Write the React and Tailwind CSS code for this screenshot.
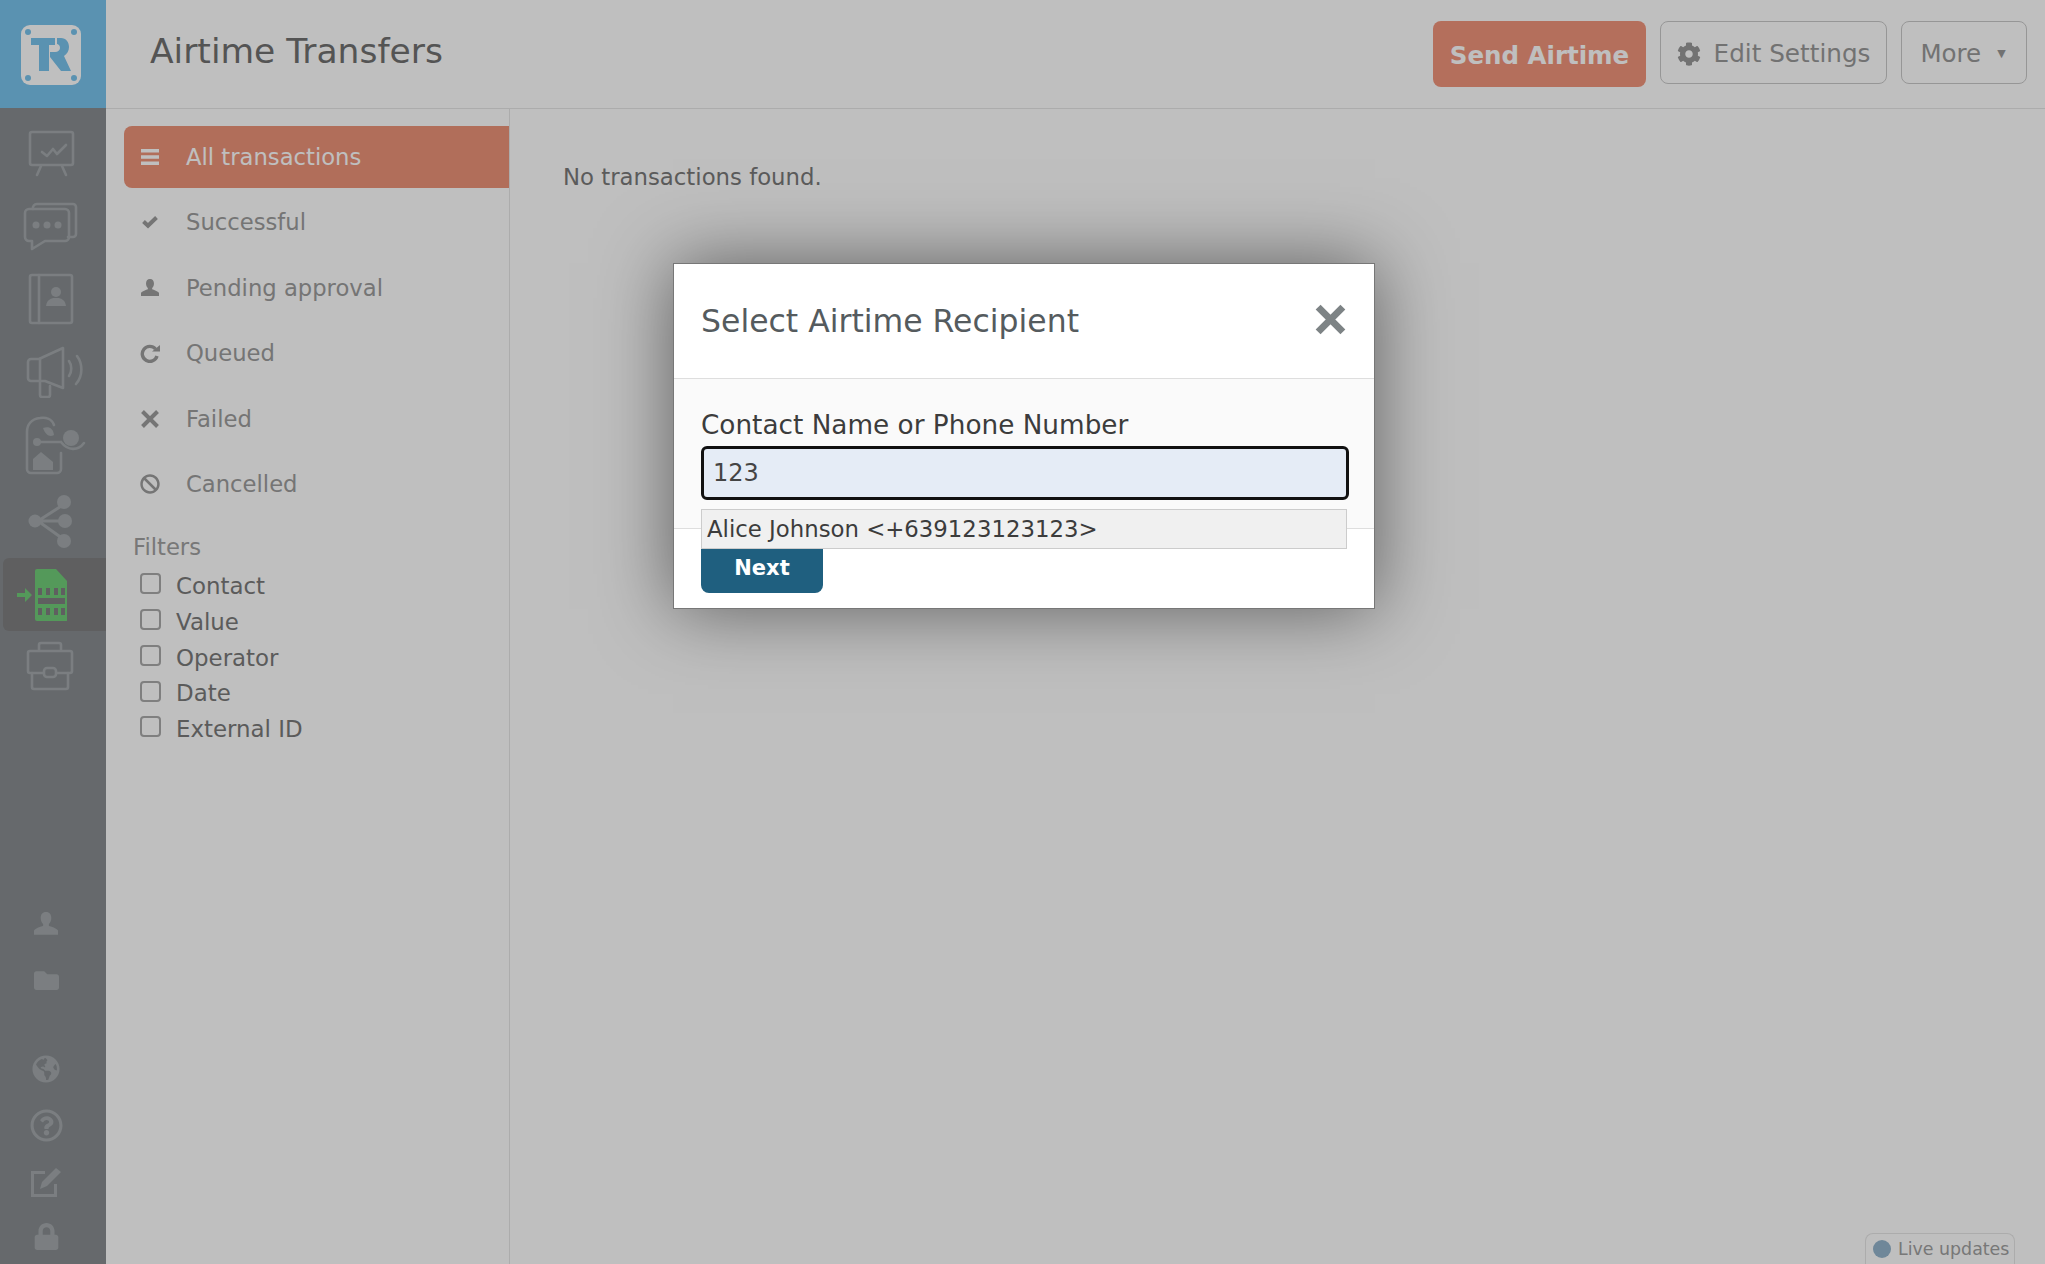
import React from 'react';
import { FaBan, FaCog, FaFolder, FaGlobeAmericas, FaRegQuestionCircle, FaLock } from 'react-icons/fa';

const Logo = () => (
  <svg width="60" height="60" viewBox="0 0 60 60">
    <rect width="60" height="60" rx="9" fill="#fff" />
    <circle cx="7" cy="7" r="3" fill="#79c3ec" />
    <circle cx="53" cy="7" r="3" fill="#79c3ec" />
    <circle cx="7" cy="53" r="3" fill="#79c3ec" />
    <circle cx="53" cy="53" r="3" fill="#79c3ec" />
    <path d="M10 13h24v7h-6v26H18V20h-8z" fill="#79c3ec" />
    <path d="M36 13h4c5 0 8 4 8 9 0 4-2 7-5 9l7 15h-10L29 32v-5h5c3 0 5-2 5-4 0-3-2-4-3-4z" fill="#79c3ec" />
  </svg>
);

const stroke = { fill: 'none', stroke: '#a4a9ac', strokeWidth: 2.6, strokeLinejoin: 'round', strokeLinecap: 'round' };

const ChartIcon = () => (
  <svg width="48" height="48" viewBox="0 0 48 48" {...stroke}>
    <rect x="3" y="3" width="43" height="33" rx="2" />
    <path d="M15 23l5 4 6-7 4 5 9-9M14 37l-4 9M35 37l4 9" />
  </svg>
);
const ChatIcon = () => (
  <svg width="56" height="56" viewBox="0 0 56 56" {...stroke}>
    <path d="M14 6h36a3 3 0 0 1 3 3v27a3 3 0 0 1-3 3h-5M14 6a4 4 0 0 0-4 5" />
    <path d="M6 11h36a4 4 0 0 1 4 4v24a4 4 0 0 1-4 4H22L9 51v-8H6a4 4 0 0 1-4-4V15a4 4 0 0 1 4-4z" />
    <circle cx="13" cy="27" r="3.5" fill="#a4a9ac" stroke="none" />
    <circle cx="24" cy="27" r="3.5" fill="#a4a9ac" stroke="none" />
    <circle cx="35" cy="27" r="3.5" fill="#a4a9ac" stroke="none" />
  </svg>
);
const ContactIcon = () => (
  <svg width="46" height="52" viewBox="0 0 46 52" {...stroke}>
    <rect x="2" y="2" width="42" height="48" rx="2" />
    <path d="M11 2v48" />
    <circle cx="28" cy="19" r="5" fill="#a4a9ac" stroke="none" />
    <path d="M18 33c1-6 4-7 7-8h6c3 1 6 2 7 8z" fill="#a4a9ac" stroke="none" />
  </svg>
);
const MegaphoneIcon = () => (
  <svg width="60" height="52" viewBox="0 0 60 52" className="ml-[8px]" {...stroke}>
    <path d="M38 2v40L20 35H6a3 3 0 0 1-3-3V16a3 3 0 0 1 3-3h8z" />
    <path d="M15 13v21M15 36v13a2 2 0 0 0 2 2h6a2 2 0 0 0 2-2v-9" />
    <path d="M44 15c3 4 3 11 0 15M52 10c6 8 6 20-1 28" />
  </svg>
);
const FlowIcon = () => (
  <svg width="62" height="60" viewBox="0 0 62 60" className="ml-[8px]" {...stroke}>
    <path d="M30 10c-2-6-8-8-14-7C8 4 3 9 3 17v37a4 4 0 0 0 4 4h26a4 4 0 0 0 4-4V38" />
    <path d="M12 27h24" />
    <circle cx="13" cy="27" r="4" fill="#a4a9ac" stroke="none" />
    <circle cx="47" cy="23" r="8" fill="#a4a9ac" stroke="none" />
    <path d="M37 27c7 9 17 9 23 1" />
    <path d="M30 20c-4 2-8 1-11-7 6-2 10 0 11 7z" fill="#a4a9ac" stroke="none" />
    <path d="M9 55V44l8-7 12 10v8z" fill="#a4a9ac" stroke="none" />
  </svg>
);
const ShareIcon = () => (
  <svg width="46" height="54" viewBox="0 0 46 54">
    <path d="M10 26L38 8M10 26h28M10 26l28 20" stroke="#a4a9ac" strokeWidth="3" fill="none" />
    <circle cx="7" cy="26" r="6.5" fill="#a4a9ac" />
    <circle cx="36" cy="7" r="7" fill="#a4a9ac" />
    <circle cx="37" cy="26" r="7" fill="#a4a9ac" />
    <circle cx="36" cy="46" r="7" fill="#a4a9ac" />
  </svg>
);
const SimIcon = () => (
  <svg width="50" height="52" viewBox="0 0 50 52" className="mr-[18px]">
    <path d="M0 27h8v-5l7 7-7 7v-5H0z" fill="#71cd78" transform="translate(0 -3)" />
    <path d="M18 2a2 2 0 0 1 2-2h19l12 13v37a2 2 0 0 1-2 2H20a2 2 0 0 1-2-2z" fill="#71cd78" />
    <path d="M21 19h4v7h-4zM29 19h4v7h-4zM37 19h4v7h-4zM44 19h4v7h-4zM21 29h27v6H21zM21 39h4v7h-4zM29 39h4v7h-4zM37 39h4v7h-4zM44 39h4v7h-4z" fill="#7f7f80" />
  </svg>
);
const CaseIcon = () => (
  <svg width="48" height="50" viewBox="0 0 48 50" className="mr-[2px] mb-[3px]" {...stroke}>
    <path d="M13 9V4a2 2 0 0 1 2-2h18a2 2 0 0 1 2 2v5" />
    <rect x="2" y="10" width="44" height="22" rx="2" />
    <path d="M6 32v14a2 2 0 0 0 2 2h32a2 2 0 0 0 2-2V32" />
    <rect x="18" y="27" width="12" height="9" rx="3" fill="#888d91" />
  </svg>
);
const EditIcon = () => (
  <svg width="32" height="32" viewBox="0 0 32 32" fill="#a4a9ac">
    <path d="M1 5h14v3H4v20h20V18h3v13H1z" />
    <path d="M10 23l2-7L26 2l5 4-14 14z" />
  </svg>
);

// glyphicon style solid shapes
const UserGlyph = ({ size }) => (
  <svg width={size} height={size} viewBox="0 0 20 20" fill="currentColor">
    <path d="M10 0c3 0 4.4 2.2 4.4 5 0 2.2-.9 4-2 5v1.400c1.600.8 6.600 2 7.600 4.100V19H0v-3.500c1-2.100 6-3.300 7.600-4.100V10c-1.100-1-2-2.800-2-5 0-2.800 1.400-5 4.400-5z" />
  </svg>
);
const BarsGlyph = ({ size }) => (
  <svg width={size} height={size} viewBox="0 0 18 18" fill="currentColor">
    <path d="M0 1h18v3.400H0zM0 7.300h18v3.400H0zM0 13.600h18V17H0z" />
  </svg>
);
const CheckGlyph = ({ size }) => (
  <svg width={size} height={size} viewBox="0 0 16 16" fill="none" stroke="currentColor" strokeWidth="4">
    <path d="M1.500 7.500l4.500 4.200L14.500 3.500" />
  </svg>
);
const RefreshGlyph = ({ size }) => (
  <svg width={size} height={size} viewBox="0 0 20 20" fill="none" stroke="currentColor" strokeWidth="3.400">
    <path d="M15.500 6A7.500 7.500 0 1 0 17 13" />
    <path d="M12 8.500h8V2z" fill="currentColor" stroke="none" />
  </svg>
);
const CrossGlyph = ({ size, width = 4 }) => (
  <svg width={size} height={size} viewBox="0 0 20 20" fill="none" stroke="currentColor" strokeWidth={width}>
    <path d="M2.500 2.500l15 15M17.500 2.500l-15 15" />
  </svg>
);

const railTop = [ChartIcon, ChatIcon, ContactIcon, MegaphoneIcon, FlowIcon, ShareIcon, SimIcon, CaseIcon];

const Sidebar = () => (
  <div className="w-[106px] shrink-0 flex flex-col bg-[#888d91] h-full">
    <div className="h-[108px] bg-[#79c3ec] flex items-center justify-center pr-[4px] pt-[2px] shrink-0">
      <Logo />
    </div>
    <div className="flex flex-col pt-[8px]">
      {railTop.map((Icon, i) => (
        <div
          key={i}
          className={`flex items-center justify-center ml-[3px] pr-[7px] rounded-l-md ${Icon === FlowIcon ? 'h-[77px] pb-[4px]' : 'h-[73px]'} ${Icon === SimIcon ? 'bg-[#7f7f80]' : ''}`}
        >
          <Icon />
        </div>
      ))}
    </div>
    <div className="mt-auto flex flex-col items-center text-[#a4a9ac] pr-[14px]">
      <div className="h-[57px] flex items-center"><UserGlyph size={24} /></div>
      <div className="h-[57px] mb-[31px] flex items-center"><FaFolder size={25} /></div>
      <div className="h-[57px] flex items-center"><FaGlobeAmericas size={28} /></div>
      <div className="h-[57px] flex items-center"><FaRegQuestionCircle size={33} /></div>
      <div className="h-[55px] flex items-center"><EditIcon /></div>
      <div className="h-[55px] flex items-center"><FaLock size={27} /></div>
    </div>
  </div>
);

const navItems = [
  { label: 'All transactions', icon: BarsGlyph, size: 18, active: true },
  { label: 'Successful', icon: CheckGlyph, size: 16 },
  { label: 'Pending approval', icon: UserGlyph, size: 18 },
  { label: 'Queued', icon: RefreshGlyph, size: 20 },
  { label: 'Failed', icon: CrossGlyph, size: 20 },
  { label: 'Cancelled', icon: FaBan, size: 20 },
];

const filters = ['Contact', 'Value', 'Operator', 'Date', 'External ID'];

const Subnav = () => (
  <div className="w-[404px] shrink-0 border-r border-[#e6e6e6] pt-[17px] pl-[18px]">
    {navItems.map(item => (
      <div
        key={item.label}
        className={`h-[62px] mb-[3.4px] flex items-center rounded-l-lg text-[22.7px] ${item.active ? 'bg-[#ed9379] text-white' : 'text-[#9c9c9c]'}`}
      >
        <span className="w-[62px] flex justify-center shrink-0 pr-[10px]">
          <item.icon size={item.size} />
        </span>
        {item.label}
      </div>
    ))}
    <div className="pl-[9px] mt-[18px] text-[22.7px] leading-[28px] text-[#a0a0a0]">Filters</div>
    <div className="pl-[16px] mt-[7px]">
      {filters.map(f => (
        <div key={f} className="h-[35.900px] flex items-center text-[22.9px] text-[#7a7a7a]">
          <span className="w-[21px] h-[21px] rounded-[4px] border-2 border-[#aaaaaa] bg-white mr-[15px] mb-[5px] shrink-0" />
          {f}
        </div>
      ))}
    </div>
  </div>
);

const Header = () => (
  <div className="h-[109px] shrink-0 border-b border-[#e6e6e6] flex items-start justify-between pl-[44px] pr-[18px]">
    <h1 className="text-[34.500px] leading-[103px] text-[#717171]">Airtime Transfers</h1>
    <div className="flex items-start gap-[14px] pt-[21px]">
      <button className="h-[66px] w-[213px] rounded-lg bg-[#f1947b] text-white font-bold text-[24.500px] pt-[5px]">Send Airtime</button>
      <button className="h-[63px] w-[227px] rounded-lg border border-[#c9c9c9] text-[#999] text-[24.700px] flex items-center justify-center gap-[13px] pt-[3px]">
        <FaCog size={24} />
        Edit Settings
      </button>
      <button className="h-[63px] w-[126px] rounded-lg border border-[#c9c9c9] text-[#999] text-[24.500px] flex items-center justify-center gap-[16px] pt-[3px] pr-[2px]">
        More
        <span className="text-[11px]">▼</span>
      </button>
    </div>
  </div>
);

const Modal = () => (
  <div className="absolute left-[673px] top-[263px] w-[702px] h-[346px] bg-white border border-[#777] shadow-[0_0_70px_rgba(0,0,0,0.5)] flex flex-col">
    <div className="h-[115px] shrink-0 border-b border-[#dedede] flex items-center justify-between pl-[27px] pr-[27px] pt-[2px]">
      <span className="text-[31.500px] text-[#555b5e]">Select Airtime Recipient</span>
      <span className="text-[#7d8385] -mt-[5px]">
        <CrossGlyph size={33} width={4.200} />
      </span>
    </div>
    <div className="h-[150px] shrink-0 bg-[#fafafa] border-b border-[#dedede] px-[27px] pt-[29px] relative">
      <div className="text-[26.300px] leading-[34px] text-[#3c3c3c]">Contact Name or Phone Number</div>
      <input
        readOnly
        value="123"
        className="mt-[4px] w-[648px] h-[54px] rounded-md border-[3px] border-[#111] bg-[#e5ecf6] px-[9px] text-[24px] text-[#444] outline-none"
      />
      <div className="absolute left-[27px] top-[130px] w-[646px] h-[40px] bg-[#f0f0f0] border border-[#ccc] pl-[5px] text-[22.800px] leading-[38px] text-[#3c3c3c] z-10">
        Alice Johnson &lt;+639123123123&gt;
      </div>
    </div>
    <div className="pl-[27px] pt-[4px]">
      <button className="w-[122px] h-[60px] rounded-lg bg-[#1f5f7f] text-white font-bold text-[21px] pt-[12px]">Next</button>
    </div>
  </div>
);

export default function App() {
  return (
    <div className="relative w-screen h-screen overflow-hidden bg-white flex font-['DejaVu_Sans',sans-serif]">
      <Sidebar />
      <div className="flex-1 flex flex-col min-w-0">
        <Header />
        <div className="flex-1 flex min-h-0">
          <Subnav />
          <div className="flex-1 pl-[53px] pt-[51px] text-[22.800px] text-[#7a7a7a]">No transactions found.</div>
        </div>
      </div>
      <div className="absolute right-[30px] bottom-0 w-[150px] h-[31px] rounded-t-lg border border-b-0 border-[#e6e6e6] flex items-center pl-[7px] gap-[7px] text-[17.400px] text-[#a0a0a0]">
        <span className="w-[18px] h-[18px] rounded-full bg-[#94b4cc] shrink-0" />
        Live updates
      </div>
      <div className="absolute inset-0 bg-black/25" />
      <Modal />
    </div>
  );
}
